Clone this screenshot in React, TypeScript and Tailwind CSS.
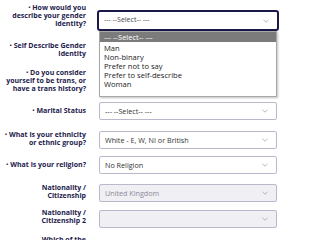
import React from 'react';

const Chevron = () => (
  <svg width="6" height="4" viewBox="0 0 6 4" className="shrink-0">
    <path d="M0.5 0.8 L3 3.2 L5.5 0.8" fill="none" stroke="#a19fb2" strokeWidth="0.8" />
  </svg>
);

type Row = {
  label: string[];
  bullet?: boolean;
  value?: string;
  disabled?: boolean;
  hidden?: boolean;
  kind?: 'select' | 'input' | 'focus' | 'none';
  h: string;
  lt: string;
  st: string;
};

// rows 2 and 3 sit under the open list, so their controls are not drawn
const rows: Row[] = [
  { label: ['How would you', 'describe your gender', 'identity?'], bullet: true, value: '--- --Select-- ---', kind: 'focus', h: 'h-[38px]', lt: 'mt-[3px]', st: 'mt-[10px]' },
  { label: ['Self Describe Gender', 'Identity'], bullet: true, kind: 'input', hidden: true, h: 'h-[27px]', lt: 'mt-[3px]', st: 'mt-[2px]' },
  { label: ['Do you consider', 'yourself to be trans, or', 'have a trans history?'], bullet: true, value: 'Woman', hidden: true, h: 'h-[37px]', lt: 'mt-[3px]', st: 'mt-[10px]' },
  { label: ['Marital Status'], bullet: true, value: '--- --Select-- ---', h: 'h-[27px]', lt: 'mt-[4px]', st: 'mt-0' },
  { label: ['What is your ethnicity', 'or ethnic group?'], bullet: true, value: 'White - E, W, NI or British', h: 'h-[27px]', lt: 'mt-[1px]', st: 'mt-[2px]' },
  { label: ['What is your religion?'], bullet: true, value: 'No Religion', h: 'h-[27px]', lt: 'mt-[4px]', st: 'mt-0' },
  { label: ['Nationality /', 'Citizenship'], value: 'United Kingdom', disabled: true, h: 'h-[26px]', lt: 'mt-[1px]', st: 'mt-[1px]' },
  { label: ['Nationality /', 'Citizenship 2'], value: '', disabled: true, h: 'h-[26px]', lt: 'mt-0', st: 'mt-[1px]' },
  { label: ['Which of the', 'following'], kind: 'none', h: 'h-[26px]', lt: 'mt-[1px]', st: 'mt-[1px]' },
];

const options = ['Man', 'Non-binary', 'Prefer not to say', 'Prefer to self-describe', 'Woman'];

const App: React.FC = () => {
  return (
    <div className="relative w-[327px] h-[240px] overflow-hidden bg-white font-['Open_Sans',sans-serif]">
      <div className="flex flex-col">
        {rows.map((r, i) => (
          <div key={i} className={`flex items-start shrink-0 ${r.h}`}>
            <div className={`w-[86px] shrink-0 text-right whitespace-nowrap text-[7px] leading-[8px] font-bold text-[#1d1b4c] ${r.lt}`}>
              {r.label.map((l, j) => (
                <div key={j}>
                  {j === 0 && r.bullet && <span className="mr-[2px] text-[5px] align-[1px]">•</span>}
                  {l}
                </div>
              ))}
            </div>
            {r.hidden || r.kind === 'none' ? null : r.kind === 'focus' ? (
              <div className={`ml-[11px] w-[182px] h-[21px] rounded-[3px] border-2 border-[#1a1848] p-[1px] ${r.st}`}>
                <div className="flex items-center justify-between h-full pl-[4px] pr-[7px] text-[7px] text-[#444]">
                  <span>{r.value}</span>
                  <Chevron />
                </div>
              </div>
            ) : (
              <div
                className={`ml-[13px] w-[178px] h-[18px] rounded-[2px] border border-[#bbb8cc] flex items-center justify-between pl-[5px] pr-[8px] text-[7.2px] ${r.st} ${r.disabled ? 'bg-[#f0eff4] text-[#8a8a96]' : 'bg-white text-[#333]'}`}
              >
                <span>{r.value}</span>
                <Chevron />
              </div>
            )}
          </div>
        ))}
      </div>

      <div className="absolute left-[99px] top-[31px] w-[178px] bg-white border border-[#a8a8a8] shadow-[1px_1px_2px_rgba(0,0,0,0.25)] text-[7.6px] leading-[9px] text-[#222]">
        <div className="bg-[#7b7b7b] text-white pl-[4px] h-[10px] leading-[10px] text-[7.5px]">--- --Select-- ---</div>
        <div className="pt-[2px] pb-[7px]">
          {options.map((o) => (
            <div key={o} className="pl-[4px] h-[9px]">{o}</div>
          ))}
        </div>
      </div>
    </div>
  );
};

export default App;
